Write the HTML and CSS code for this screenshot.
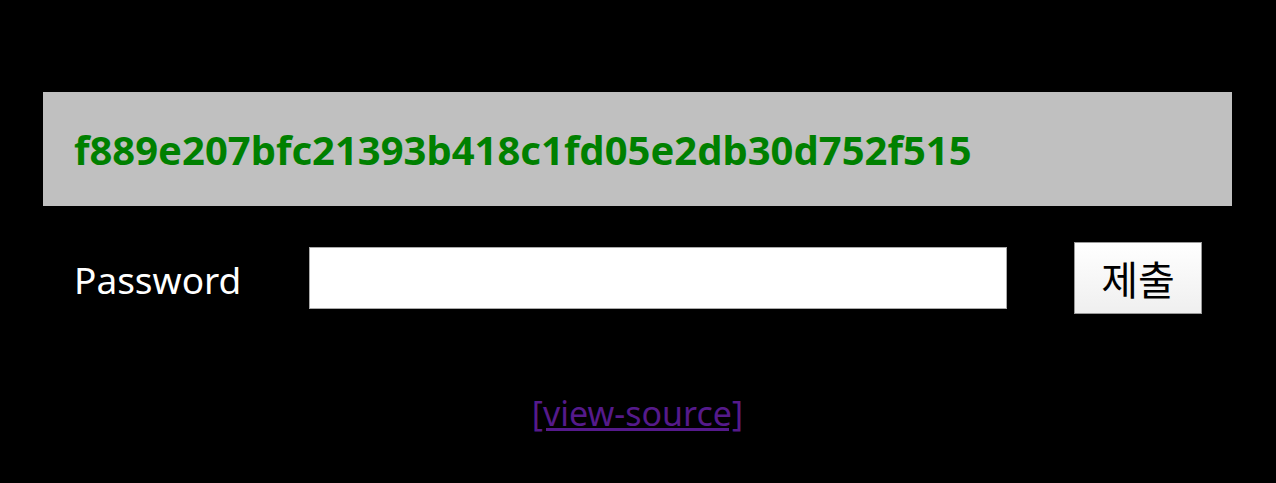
FILE: index.html
```html
<!DOCTYPE html>
<html lang="ko">
<head>
    <meta charset="UTF-8">
    <meta name="viewport" content="width=device-width, initial-scale=1.0">
    <title>Challenge</title>
    <link rel="stylesheet" href="styles.css">
</head>
<body>
    <div class="wrap">
        <div class="hash">f889e207bfc21393b418c1fd05e2db30d752f515</div>
        <form class="login" onsubmit="return false;">
            <label for="pw">Password</label>
            <input type="password" id="pw" name="pw">
            <button type="submit">제출</button>
        </form>
        <div class="source"><a href="#">[view-source]</a></div>
    </div>
</body>
</html>
```

FILE: styles.css
```css
body {
    margin: 0;
    background-color: #000;
    font-family: "Noto Sans", "Noto Sans CJK KR", sans-serif;
    color: #fff;
}
.wrap {
    padding: 92px 44px 0 43px;
}
.hash {
    background-color: #c0c0c0;
    color: #008000;
    font-weight: bold;
    font-size: 40px;
    height: 114px;
    box-sizing: border-box;
    padding-left: 31px;
    display: flex;
    align-items: center;
}
.login {
    display: flex;
    align-items: center;
    margin-top: 36px;
    padding-left: 31px;
}
.login label {
    font-size: 37px;
    width: 235px;
    margin-top: 2px;
}
.login input {
    width: 698px;
    height: 62px;
    box-sizing: border-box;
    border: 1px solid #aaa;
    background: #fff;
    margin: 0;
}
.login button {
    margin-left: 67px;
    width: 128px;
    height: 72px;
    font-family: "Noto Sans CJK KR", sans-serif;
    font-size: 40px;
    line-height: 1;
    color: #000;
    background: linear-gradient(#fff, #efefef);
    border: 1px solid #999;
    padding: 0;
}
.source {
    text-align: center;
    margin-top: 76px;
    font-size: 34px;
}
.source a {
    color: #551a8b;
}
```
